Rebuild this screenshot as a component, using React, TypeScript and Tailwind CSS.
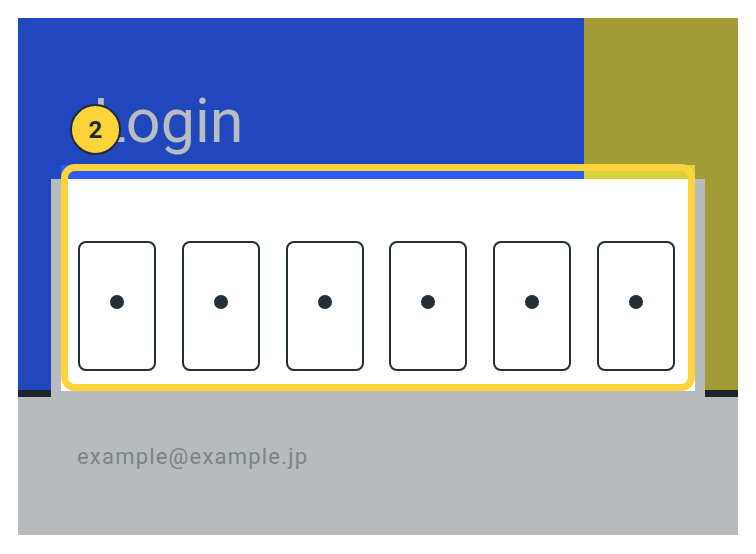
export default function App() {
  const digits = [0, 1, 2, 3, 4, 5];
  return (
    <div className="w-[756px] h-[554px] bg-white p-[18px]">
      <div className="relative w-[720px] h-[517px] bg-[#b8bbbe] flex flex-col font-['Roboto',sans-serif]">
        {/* header area with the code entry card */}
        <div className="grid h-[379px]">
          <div className="[grid-area:1/1] flex flex-col">
            <div className="flex flex-1">
              <div className="flex-1 bg-[#2147bd]" />
              <div className="w-[154px] bg-[#a39b35]" />
            </div>
            <div className="h-[7px] bg-[#1b262c]" />
          </div>
          <div className="[grid-area:1/1] flex flex-col">
            <h1 className="ml-[75px] mt-[73px] text-[61px] leading-[60px] text-[#b9bcc0] font-normal">
              Login
            </h1>
            <div className="relative mx-[33px] mt-[28px] flex-1 bg-[#b8bbbe] flex flex-col">
              <div className="absolute left-[10px] right-[10px] top-[-14px] h-[14px] flex">
                <div className="w-[523px] bg-[#2e5bf2]" />
                <div className="flex-1 bg-[#dad23b]" />
              </div>
              <div className="mx-[10px] mb-[6px] flex-1 bg-white flex justify-between pl-[17px] pr-[20px] pt-[62px] pb-[14px]">
                {digits.map((d) => (
                  <div
                    key={d}
                    className="w-[78px] h-[130px] rounded-[8px] border-2 border-[#223037] flex items-center justify-center pb-[8px]"
                  >
                    <div className="w-[14px] h-[14px] rounded-full bg-[#223037]" />
                  </div>
                ))}
              </div>
              <div className="absolute left-[10px] right-[10px] top-[-15px] bottom-[6px] border-[7px] border-[#ffd43b] rounded-[14px]" />
            </div>
          </div>
        </div>
        {/* email row */}
        <div className="flex-1 pl-[59px] pt-[48px]">
          <p className="text-[22px] leading-[24px] tracking-[1.2px] text-[#78848a]">example@example.jp</p>
        </div>
        {/* step badge */}
        <div className="absolute left-[52px] top-[86px] w-[51px] h-[51px] rounded-full bg-[#ffd43b] border-2 border-[#1d2b33] flex items-center justify-center">
          <span className="text-[24px] leading-none font-bold text-[#1d2b33]">2</span>
        </div>
      </div>
    </div>
  );
}
